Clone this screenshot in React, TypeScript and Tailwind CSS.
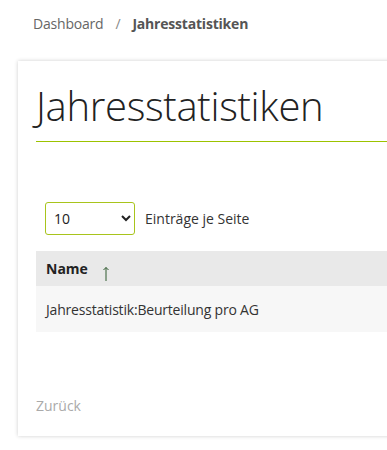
export default function App() {
  return (
    <div
      className="min-h-screen w-[387px] overflow-hidden bg-white"
      style={{ fontFamily: '"Open Sans", "Noto Sans", sans-serif' }}
    >
      <nav className="flex h-[46px] items-center pl-[33px] text-[14px] tracking-[-0.2px] text-[#666]">
        <span>Dashboard</span>
        <span className="mx-[12px] text-[#888]">/</span>
        <span className="font-bold text-[#555]">Jahresstatistiken</span>
      </nav>

      <div className="ml-[18px] mt-[15px] w-[600px] bg-white pl-[18px] pt-[18px] shadow-[0_0_4px_rgba(0,0,0,0.2)]">
        <h1 className="h-[62px] text-[40px] font-light leading-[54px] tracking-[-0.3px] text-[#222]">
          Jahresstatistiken
        </h1>
        <div className="h-px bg-[#9cc300]" />

        <div className="mt-[60px] flex items-center pl-[9px]">
          <select className="h-[33px] w-[90px] rounded-[3px] border border-[#a8c41c] bg-white pl-[4px] text-[14px] text-[#222]">
            <option>10</option>
          </select>
          <span className="ml-[10px] text-[14px] text-[#333]">Einträge je Seite</span>
        </div>

        <div className="mt-[16px]">
          <div className="flex h-[35px] items-center bg-[#e9e9e9] pl-[10px] text-[14px]">
            <span className="font-bold text-[#222]">Name</span>
            <svg width="8" height="16" viewBox="0 0 8 16" className="ml-[14px] mt-[8px]" fill="none" stroke="#2f5a2f" strokeWidth="1">
              <path d="M4 2.5V16" />
              <path d="M1.5 5L4 2.5L6.5 5" />
            </svg>
          </div>
          <div className="flex h-[46px] items-center bg-[#f7f7f7] pl-[10px] text-[14px] tracking-[-0.2px] text-[#333]">
            Jahresstatistik:Beurteilung pro AG
          </div>
        </div>

        <div className="flex h-[104px] items-end pb-[20px] text-[14px] text-[#aaa]">Zurück</div>
      </div>
    </div>
  );
}
